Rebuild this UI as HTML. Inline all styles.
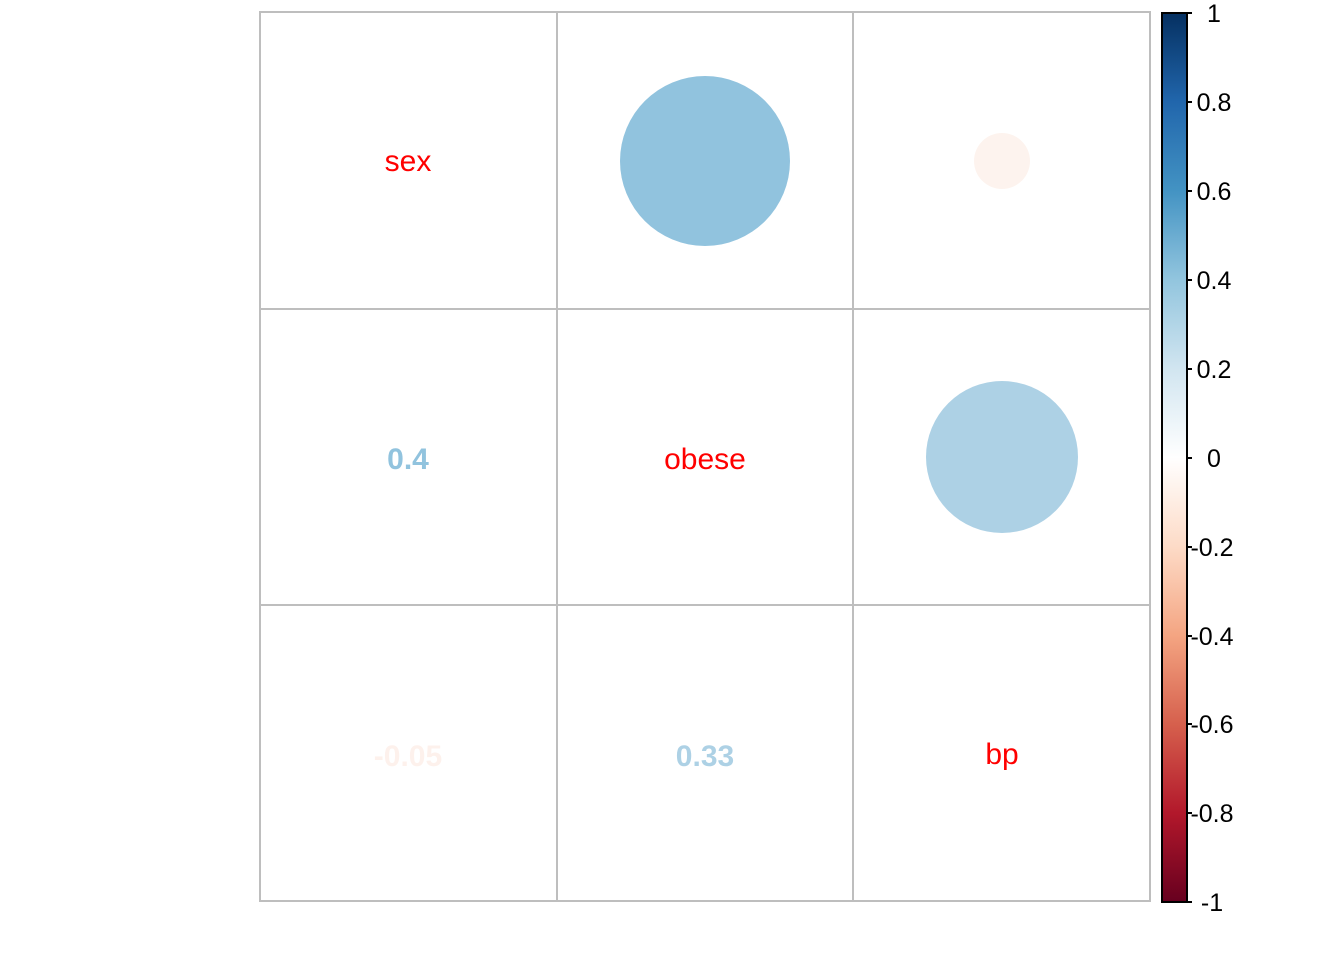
<!DOCTYPE html><html><head><style>body{margin:0;background:#fff}</style></head><body>
<svg width="1344" height="960" xmlns="http://www.w3.org/2000/svg" font-family="Liberation Sans, Arial, sans-serif">
<defs><linearGradient id="g" x1="0" y1="0" x2="0" y2="1">
<stop offset="0" stop-color="#053061"/><stop offset="0.1" stop-color="#2166AC"/><stop offset="0.2" stop-color="#4393C3"/><stop offset="0.3" stop-color="#92C5DE"/><stop offset="0.4" stop-color="#D1E5F0"/><stop offset="0.5" stop-color="#FFFFFF"/><stop offset="0.6" stop-color="#FDDBC7"/><stop offset="0.7" stop-color="#F4A582"/><stop offset="0.8" stop-color="#D6604D"/><stop offset="0.9" stop-color="#B2182B"/><stop offset="1" stop-color="#67001F"/></linearGradient></defs>
<circle cx="705" cy="161" r="85" fill="#91C3DE"/>
<circle cx="1002" cy="161" r="28" fill="#FDF3EE"/>
<circle cx="1002" cy="457" r="76" fill="#ADD1E5"/>
<g stroke="#bebebe" stroke-width="2" fill="none">
<rect x="260" y="12" width="890" height="889"/>
<line x1="557" y1="12" x2="557" y2="901"/><line x1="853" y1="12" x2="853" y2="901"/>
<line x1="260" y1="309" x2="1150" y2="309"/><line x1="260" y1="605" x2="1150" y2="605"/>
</g>
<g font-size="30" text-anchor="middle" fill="#f00">
<text x="408" y="171">sex</text><text x="705" y="469">obese</text><text x="1002" y="764">bp</text></g>
<g font-size="30" font-weight="bold" text-anchor="middle">
<text x="408" y="469" fill="#91C3DE">0.4</text><text x="408" y="766" fill="#FDF1EC">-0.05</text><text x="705" y="766" fill="#ADD1E5">0.33</text></g>
<rect x="1162" y="13" width="25" height="889" fill="url(#g)" stroke="#000" stroke-width="2"/>
<g stroke="#000" stroke-width="2">
<line x1="1187" y1="13" x2="1192" y2="13"/><line x1="1187" y1="102" x2="1192" y2="102"/><line x1="1187" y1="191" x2="1192" y2="191"/><line x1="1187" y1="280" x2="1192" y2="280"/><line x1="1187" y1="369" x2="1192" y2="369"/><line x1="1187" y1="458" x2="1192" y2="458"/><line x1="1187" y1="547" x2="1192" y2="547"/><line x1="1187" y1="636" x2="1192" y2="636"/><line x1="1187" y1="724" x2="1192" y2="724"/><line x1="1187" y1="813" x2="1192" y2="813"/><line x1="1187" y1="902" x2="1192" y2="902"/></g>
<g font-size="25" text-anchor="middle" fill="#000">
<text x="1214" y="22">1</text><text x="1214" y="111">0.8</text><text x="1214" y="200">0.6</text><text x="1214" y="289">0.4</text><text x="1214" y="378">0.2</text><text x="1214" y="467">0</text><text x="1212" y="556">-0.2</text><text x="1212" y="645">-0.4</text><text x="1212" y="733">-0.6</text><text x="1212" y="822">-0.8</text><text x="1212" y="911">-1</text></g>
</svg></body></html>
